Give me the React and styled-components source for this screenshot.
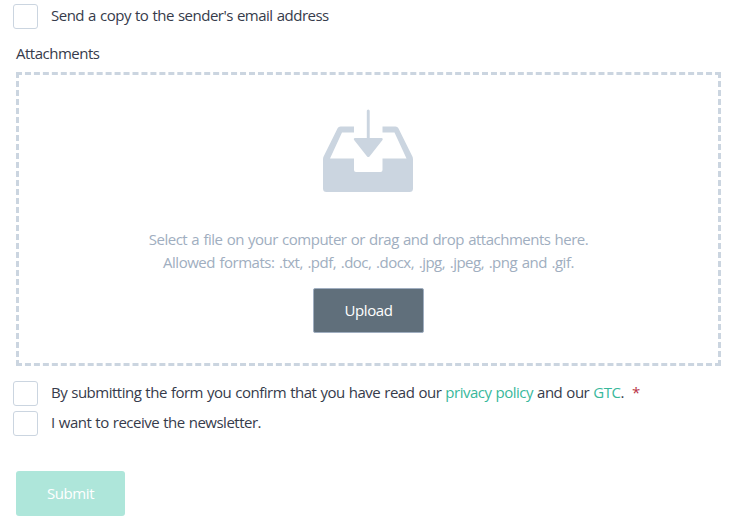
import React, { useState } from 'react';
import styled, { createGlobalStyle } from 'styled-components';

const GlobalStyle = createGlobalStyle`
  * {
    box-sizing: border-box;
  }
  body {
    margin: 0;
    background-color: #fff;
    color: #363b4b;
    font-family: "Segoe UI", "Open Sans", "Noto Sans", sans-serif;
    font-size: 15px;
    line-height: 23px;
  }
`;
const Form = styled.form`
  display: flex;
  flex-direction: column;
  width: 736px;
  height: 532px;
  padding: 4px 15px 0 16px;
  overflow: hidden;
`;
const CheckRow = styled.label`
  display: flex;
  align-items: center;
  height: 25px;
  margin: 0 0 5px -3px;
  cursor: pointer;
`;
const CheckInput = styled.input`
  appearance: none;
  flex: none;
  width: 25px;
  height: 25px;
  margin: 0 13px 0 0;
  background-color: #fff;
  border: 1px solid #cbd5e0;
  border-radius: 3px;
  &:checked {
    background-color: #38b2a0;
  }
`;
const Text = styled.span`
  white-space: nowrap;
  letter-spacing: -0.5px;
  word-spacing: ${props => props.$wordSpacing || '0.67px'};
`;
const CheckText = styled(Text)`
  padding-bottom: 2px;
`;
const Title = styled(Text)`
  height: 23px;
  margin: 8px 0 7px;
`;
const DropZone = styled.div`
  display: flex;
  flex-direction: column;
  align-items: center;
  height: 294px;
  margin-bottom: 15px;
  padding-top: 34px;
  border: 3px dashed #cbd5e0;
`;
const TrayIcon = styled.svg`
  width: 92px;
  height: 84px;
  margin: 0 1px 35px 0;
  fill: #cbd5e0;
`;
const Hint = styled(Text)`
  color: #a0aec0;
`;
const Button = styled.button`
  height: 45px;
  padding: 0;
  border-radius: 3px;
  color: #fff;
  font: inherit;
  letter-spacing: -0.4px;
  cursor: pointer;
`;
const UploadButton = styled(Button)`
  width: 111px;
  margin-top: 14px;
  background-color: #606f7b;
  border: 1px solid #a0aec0;
  border-radius: 2px;
`;
const SubmitButton = styled(Button)`
  width: 109px;
  margin-top: 30px;
  background-color: #aee6da;
  border: none;
  font-weight: 500;
`;
const Link = styled.a`
  color: #38b89b;
  text-decoration: none;
`;
const Required = styled.span`
  margin-left: 4px;
  color: #b83244;
`;

function CheckField({ children }) {
    const [checked, setChecked] = useState(false)
    return(
        <CheckRow>
            <CheckInput type='checkbox' checked={checked} onChange={(e) => setChecked(e.target.checked)} />
            <CheckText>{children}</CheckText>
        </CheckRow>
    )
}

function App() {
    return(
        <>
            <GlobalStyle/>
            <Form onSubmit={(e) => e.preventDefault()}>
                <CheckField>Send a copy to the sender's email address</CheckField>
                <Title>Attachments</Title>
                <DropZone>
                    <TrayIcon viewBox='0 0 92 84'>
                        <path d='M32 17.5H18.5Q16.5 17.5 15.6 19.3L1.6 47.5Q1 48.7 1 50.5V79.5Q1 83 4.5 83H87.5Q91 83 91 79.5V50.5Q91 48.7 90.4 47.5L76.4 19.3Q75.5 17.5 73.5 17.5H60.5V23.5H72.5L84.5 49.500H60.500V61Q60.500 63 58.500 63H34Q32 63 32 61V49.500H8L20 23.500H32Z' />
                        <path d='M46.200 .5Q47.700 .5 47.700 2V29H59.500Q61.500 29.500 60.300 31.200L47.500 47.500Q46.300 48.700 45.100 47.500L32.300 31.200Q31 29.500 33 29H44.800V2Q44.800 .5 46.200 .5Z' />
                    </TrayIcon>
                    <Hint $wordSpacing='0.8px'>Select a file on your computer or drag and drop attachments here.</Hint>
                    <Hint $wordSpacing='1.2px'>Allowed formats: .txt, .pdf, .doc, .docx, .jpg, .jpeg, .png and .gif.</Hint>
                    <UploadButton type='button'>Upload</UploadButton>
                </DropZone>
                <CheckField>
                    By submitting the form you confirm that you have read our <Link href='#privacy'>privacy policy</Link> and our <Link href='#gtc'>GTC</Link>. <Required>*</Required>
                </CheckField>
                <CheckField>I want to receive the newsletter.</CheckField>
                <SubmitButton type='submit'>Submit</SubmitButton>
            </Form>
        </>
    )
}
export default App;
